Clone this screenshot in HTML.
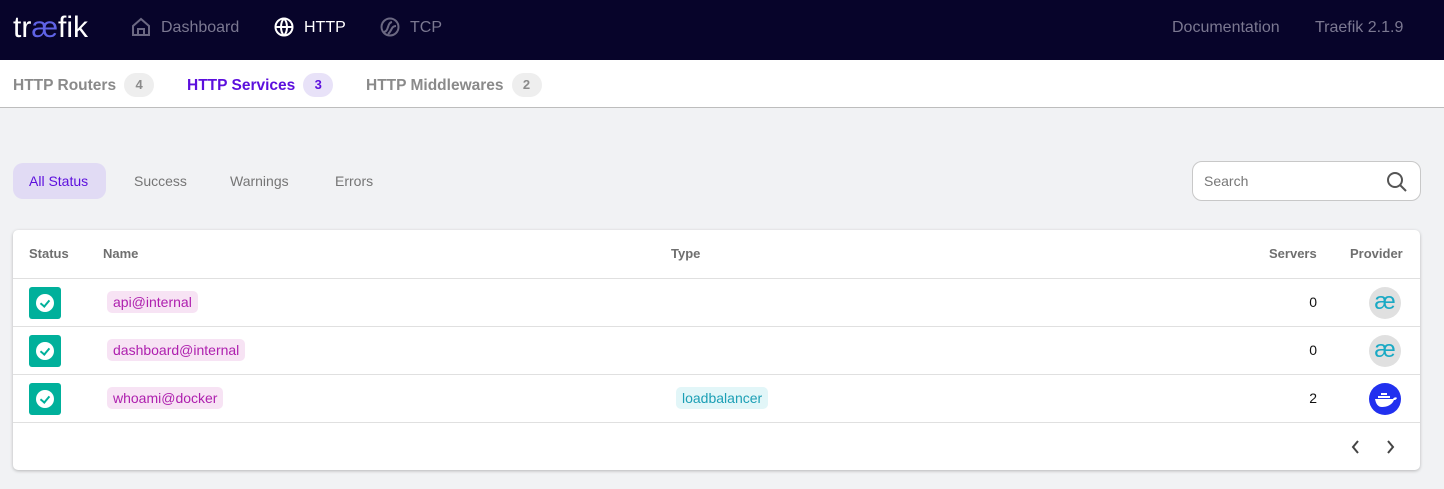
<!DOCTYPE html>
<html><head><style>
*{box-sizing:border-box;margin:0;padding:0}
body{width:1444px;height:489px;background:#f1f2f4;font-family:"Liberation Sans",sans-serif;position:relative;overflow:hidden}
.nav{position:absolute;left:0;top:0;width:1444px;height:60px;background:#07042a}
.a{position:absolute;font-size:16px;top:19px;color:#7b7891}
.tabs{position:absolute;left:0;top:60px;width:1444px;height:48px;background:#fff;border-bottom:1px solid #bdbdbd}
.t{position:absolute;top:14px;font-size:15.5px;font-weight:bold;color:#8a8a8a}
.bdg{display:inline-block;width:30px;height:24px;border-radius:12px;background:#eee;text-align:center;line-height:24px;font-size:13px;margin-left:8px;vertical-align:middle;position:relative;top:-1px}
.f{position:absolute;top:173px;font-size:14px;color:#757575}
.card{position:absolute;left:13px;top:230px;width:1407px;height:240px;background:#fff;border-radius:5px;box-shadow:0 1px 3px rgba(0,0,0,.25)}
.h{position:absolute;top:16px;font-size:13px;font-weight:bold;color:#6f6f6f}
.row{position:absolute;left:0;width:1407px;height:48px;border-top:1px solid #e0e0e0}
.st{position:absolute;left:16px;top:8px;width:32px;height:32px;background:#00b09b;border-radius:3px}
.st i{position:absolute;left:7px;top:7px;width:18px;height:18px;border-radius:50%;background:#fff}
.nm{position:absolute;left:94px;top:12px;background:#f7e3f4;color:#ae1fae;font-size:14px;padding:3px 6px;border-radius:5px}
.sv{position:absolute;right:103px;top:15px;font-size:14px;color:#111}
.pv{position:absolute;left:1356px;top:8px;width:32px;height:32px;border-radius:50%;background:#e0e0e0;color:#1aa9c4;text-align:center;font-size:24px;line-height:30px}
.st i::after{content:"";position:absolute;left:6px;top:4px;width:4px;height:7px;border:solid #00b09b;border-width:0 2px 2px 0;transform:rotate(40deg)}
</style></head><body>
<div class="nav">
<div style="position:absolute;left:13px;top:11px;font-size:30px;color:#fff">tr<span style="color:#5f63e6">æ</span>fik</div>
<svg style="position:absolute;left:131px;top:17px" width="20" height="20" viewBox="0 0 20 20" fill="none" stroke="#6b6882" stroke-width="2"><path d="M2 9L10 2l8 7v9H2z M7 18v-6h6v6"/></svg>
<div class="a" style="left:161px">Dashboard</div>
<svg style="position:absolute;left:274px;top:17px" width="20" height="20" viewBox="0 0 20 20" fill="none" stroke="#fff" stroke-width="2"><circle cx="10" cy="10" r="8.5"/><path d="M1.5 10h17M10 1.5c-4 4-4 13 0 17M10 1.5c4 4 4 13 0 17"/></svg>
<div class="a" style="left:304px;color:#fff">HTTP</div>
<svg style="position:absolute;left:380px;top:17px" width="20" height="20" viewBox="0 0 20 20" fill="none" stroke="#6b6882" stroke-width="2"><circle cx="10" cy="10" r="8.5"/><path d="M4 15c5-1 3-9 8-10M8 17c4-3 3-8 8-8"/></svg>
<div class="a" style="left:410px">TCP</div>
<div class="a" style="left:1172px">Documentation</div>
<div class="a" style="left:1315px">Traefik 2.1.9</div>
</div>
<div class="tabs">
<div class="t" style="left:13px">HTTP Routers<span class="bdg">4</span></div>
<div class="t" style="left:187px;color:#5c0fdd">HTTP Services<span class="bdg" style="background:#e8e2f8;color:#5c0fdd">3</span></div>
<div class="t" style="left:366px">HTTP Middlewares<span class="bdg">2</span></div>
</div>
<div style="position:absolute;left:13px;top:163px;width:93px;height:36px;border-radius:10px;background:#e1dbf4"></div>
<div class="f" style="left:29px;color:#5c0fdd">All Status</div>
<div class="f" style="left:134px">Success</div>
<div class="f" style="left:230px">Warnings</div>
<div class="f" style="left:335px">Errors</div>
<div style="position:absolute;left:1192px;top:161px;width:229px;height:40px;border:1px solid #c8c8c8;border-radius:10px;background:#fff">
<span style="position:absolute;left:11px;top:11px;font-size:14px;color:#777">Search</span>
<svg style="position:absolute;left:193px;top:9px" width="22" height="22" viewBox="0 0 22 22" fill="none" stroke="#555" stroke-width="2"><circle cx="9" cy="9" r="7"/><path d="M14 14l6 6"/></svg>
</div>
<div class="card">
<div class="h" style="left:16px">Status</div><div class="h" style="left:90px">Name</div><div class="h" style="left:658px">Type</div><div class="h" style="left:1256px">Servers</div><div class="h" style="left:1337px">Provider</div>
<div class="row" style="top:48px"><div class="st"><i></i></div><div class="nm">api@internal</div><div class="sv">0</div><div class="pv">æ</div></div>
<div class="row" style="top:96px"><div class="st"><i></i></div><div class="nm">dashboard@internal</div><div class="sv">0</div><div class="pv">æ</div></div>
<div class="row" style="top:144px"><div class="st"><i></i></div><div class="nm">whoami@docker</div>
<div class="nm" style="left:663px;background:#e2f6f8;color:#1c9fb5">loadbalancer</div><div class="sv">2</div>
<div class="pv" style="background:#2130ef"><svg width="32" height="32" viewBox="0 0 32 32"><path fill="#fff" d="M6 16h18c1-2 3-2 4-1-1 2-2 2-3 2-2 5-7 7-12 7-4 0-6-3-7-8zM9 13h3v2H9zM12 13h3v2h-3zM15 13h3v2h-3zM12 10h3v2h-3zM15 10h3v2h-3zM18 13h3v2h-3z"/></svg></div></div>
<div class="row" style="top:192px">
<svg style="position:absolute;left:1337px;top:17px" width="12" height="14" viewBox="0 0 12 14" fill="none" stroke="#444" stroke-width="2"><path d="M8 1L3 7l5 6"/></svg>
<svg style="position:absolute;left:1371px;top:17px" width="12" height="14" viewBox="0 0 12 14" fill="none" stroke="#444" stroke-width="2"><path d="M4 1l5 6-5 6"/></svg>
</div>
</div>
</body></html>
